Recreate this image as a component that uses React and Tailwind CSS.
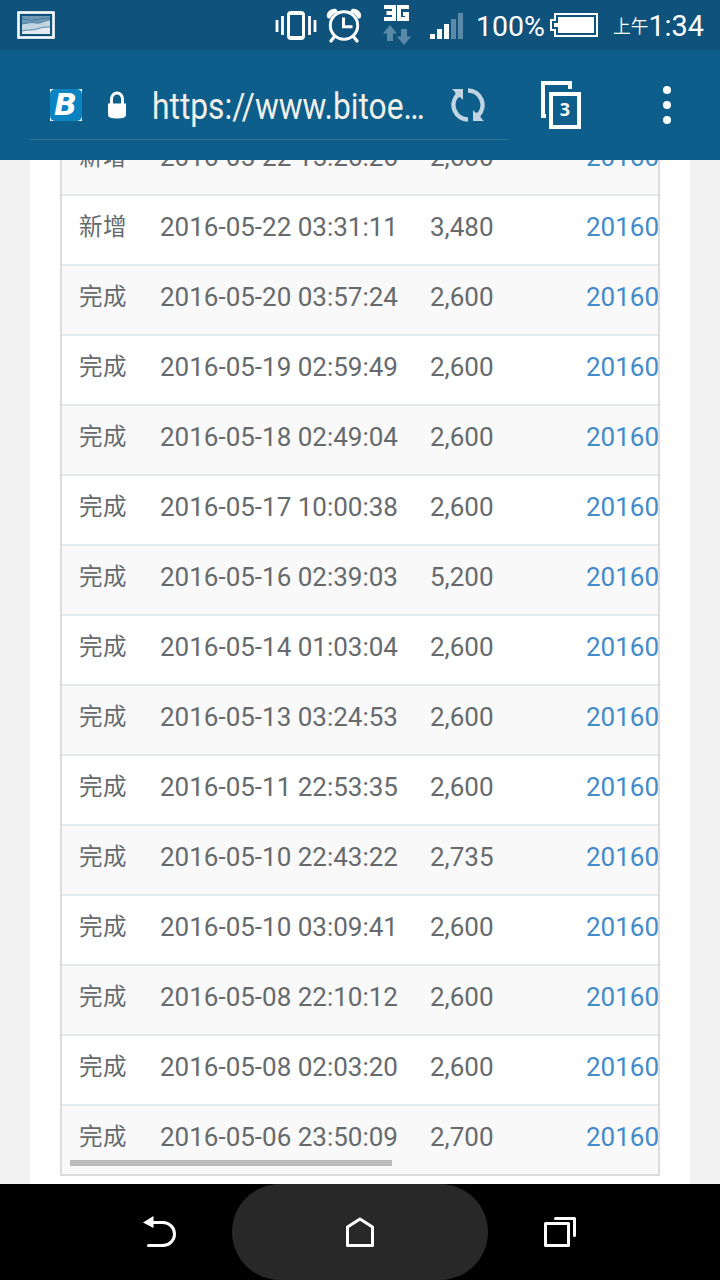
import React from "react";

const rows = [
  { status: "新增", date: "2016-05-22 15:26:26", amount: "2,600" },
  { status: "新增", date: "2016-05-22 03:31:11", amount: "3,480" },
  { status: "完成", date: "2016-05-20 03:57:24", amount: "2,600" },
  { status: "完成", date: "2016-05-19 02:59:49", amount: "2,600" },
  { status: "完成", date: "2016-05-18 02:49:04", amount: "2,600" },
  { status: "完成", date: "2016-05-17 10:00:38", amount: "2,600" },
  { status: "完成", date: "2016-05-16 02:39:03", amount: "5,200" },
  { status: "完成", date: "2016-05-14 01:03:04", amount: "2,600" },
  { status: "完成", date: "2016-05-13 03:24:53", amount: "2,600" },
  { status: "完成", date: "2016-05-11 22:53:35", amount: "2,600" },
  { status: "完成", date: "2016-05-10 22:43:22", amount: "2,735" },
  { status: "完成", date: "2016-05-10 03:09:41", amount: "2,600" },
  { status: "完成", date: "2016-05-08 22:10:12", amount: "2,600" },
  { status: "完成", date: "2016-05-08 02:03:20", amount: "2,600" },
  { status: "完成", date: "2016-05-06 23:50:09", amount: "2,700" },
];

const StatusBar = () => {
  return (
    <div className="flex h-[50px] items-center bg-[#0f537c] pl-[17px] text-white">
      <svg className="shrink-0" width="38" height="28" viewBox="0 0 38 28">
        <rect x="1.5" y="1.5" width="35" height="25" fill="#0f537c" stroke="white" strokeWidth="2.6" />
        <rect x="5" y="5" width="28" height="18" fill="#6f9ab5" />
        <path d="M5 13c6-1 9-2 14-1s9-3 14-3v14H5z" fill="#c3d5e1" />
        <path d="M5 20c6-2 10 0 15-2s9-2 13-2v7H5z" fill="#e3ebf1" />
        <path
          d="M5 8c6 0 9 2 14 1s9-2 14-2M5 13c6-1 9-2 14-1s9-3 14-3M5 20c6-2 10 0 15-2s9-2 13-2"
          fill="none"
          stroke="#38729a"
          strokeWidth="0.8"
        />
      </svg>
      <svg className="ml-[220px] shrink-0" width="42" height="32" viewBox="0 0 42 32">
        <rect x="13.5" y="3.5" width="15" height="26" rx="2.5" fill="none" stroke="white" strokeWidth="3" />
        <path d="M14 3h14v3H14zM14 27h14v3H14z" fill="white" />
        <path d="M2 11v12M7.5 7v19M34.5 7v19M40 11v12" stroke="white" strokeWidth="2.8" />
      </svg>
      <svg className="ml-[9px] shrink-0" width="36" height="36" viewBox="0 0 36 36">
        <path d="M1 10C0 5 5 1 10 2L12 4.5Q6 7 4 11.500Q2 12 1 10zM35 10C36 5 31 1 26 2L24 4.500Q30 7 32 11.500Q34 12 35 10z" fill="white" />
        <circle cx="18" cy="18.500" r="13.700" fill="none" stroke="white" strokeWidth="3" />
        <path d="M17.500 10.500v9.300h9" fill="none" stroke="white" strokeWidth="3" />
        <path d="M8.500 29.500L5 34M27.500 29.500L31 34" stroke="white" strokeWidth="3.200" strokeLinecap="round" />
      </svg>
      <svg className="ml-[20px] shrink-0" width="30" height="42" viewBox="0 0 30 42">
        <path
          d="M2 3H12V15H2M4.500 9H12M27 3H17V15H25V10H21"
          fill="none"
          stroke="white"
          strokeWidth="4"
        />
        <path d="M8 21L15 29.500H11V37H5V29.500H1z" fill="#5a8aa8" />
        <path d="M22 41L29 32.500H25V25H19V32.500H15z" fill="#5a8aa8" />
      </svg>
      <svg className="ml-[18px] shrink-0" width="33" height="28" viewBox="0 0 33 28">
        <path d="M0 23h5v5H0zM7 18h5v10H7zM14 13h5v15h-5z" fill="white" />
        <path d="M21 8h5v20h-5zM28 2h5v26h-5z" fill="#5a8aa8" />
      </svg>
      <span className="ml-[13px] w-[68px] whitespace-nowrap pt-1 text-[28.5px] leading-none">
        100%
      </span>
      <svg className="ml-[6px] shrink-0" width="48" height="24" viewBox="0 0 48 24">
        <path d="M5 1H47V23H5V17H1V7H5z" fill="none" stroke="white" strokeWidth="2" />
        <path d="M8 4H44V20H8V14H4V10H8z" fill="white" />
      </svg>
      <span className="ml-[15px] whitespace-nowrap pt-0.5 font-['Noto_Sans_CJK_TC',sans-serif] text-[17.7px] font-[350] leading-none">
        上午
      </span>
      <span className="whitespace-nowrap pt-0.5 text-[28.8px] leading-none">1:34</span>
    </div>
  );
};

const AddressBar = () => {
  return (
    <div className="flex h-[110px] items-center bg-[#0e5e8b] pl-[30px]">
      <div className="flex h-[69px] w-[478px] items-center border-b border-[#2f7499] pl-5">
        <div className="h-8 w-8 shrink-0 bg-white">
          <div className="flex h-8 w-8 items-center justify-center rounded-[5px] bg-[#0c83c1] pr-px font-['DejaVu_Sans',sans-serif] text-[30px] font-bold italic leading-none text-white">
            B
          </div>
        </div>
        <svg className="ml-[26px] shrink-0" width="18" height="28" viewBox="0 0 18 28">
          <path d="M3.500 14V8a5.500 6 0 0 1 11 0v6" fill="none" stroke="white" strokeWidth="3" />
          <path d="M0 12.500H18V24Q18 27.500 9 27.500T0 24z" fill="white" />
        </svg>
        <span className="ml-[26px] w-[274px] whitespace-nowrap pt-1">
          <span className="inline-block origin-left scale-x-[0.882] text-[36px] leading-none text-[#f2efe9]">
            https://www.bitoe…
          </span>
        </span>
        <svg className="ml-[25px] shrink-0" width="34" height="34" viewBox="0 0 34 34">
          <path
            d="M17 31.500A14.500 14.500 0 0 1 6.500 7M17 2.500A14.500 14.500 0 0 1 27.500 27"
            fill="none"
            stroke="#c0d4e2"
            strokeWidth="4.400"
          />
          <path d="M1 1H12V12L9 9L6 10L4 4zM33 33H22V22L25 25L28 24L30 30z" fill="#c0d4e2" />
        </svg>
      </div>
      <svg className="ml-[33px]" width="40" height="48" viewBox="0 0 40 48">
        <path d="M5 35H2V2H29V8" fill="none" stroke="white" strokeWidth="4" />
        <rect x="10" y="13" width="28" height="33" fill="none" stroke="white" strokeWidth="4" />
        <text x="24" y="35" textAnchor="middle" fill="white" fontFamily="Open Sans" fontWeight="700" fontSize="18">
          3
        </text>
      </svg>
      <svg className="ml-[82px]" width="8" height="38" viewBox="0 0 8 38">
        <circle cx="4" cy="4" r="4" fill="white" />
        <circle cx="4" cy="19" r="4" fill="white" />
        <circle cx="4" cy="34" r="4" fill="white" />
      </svg>
    </div>
  );
};

const OrderTable = () => {
  return (
    <div className="relative flex h-[1016px] w-[600px] flex-col justify-end overflow-hidden border-x-2 border-b-2 border-[#dcdcdc]">
      {rows.map((row) => (
        <div
          key={row.date}
          className="flex h-[70px] w-[720px] shrink-0 items-center border-t-2 border-[#e4e9ee] pb-[6px] pl-4 odd:bg-[#f9f9f9]">
          <span className="w-[82px] pb-[2px] pl-px font-['Noto_Sans_CJK_TC',sans-serif] text-[23.5px] font-normal leading-none tracking-[0.5px]">
            {row.status}
          </span>
          <span className="w-[270px]">{row.date}</span>
          <span className="w-[156px]">{row.amount}</span>
          <a className="text-[#428bca]">20160</a>
        </div>
      ))}
      {/* horizontal scroll indicator */}
      <div className="absolute bottom-2 left-2 h-1.5 w-[322px] bg-[#bababa]" />
    </div>
  );
};

const NavBar = () => {
  return (
    <div className="flex h-24 items-center bg-black">
      <button className="flex w-[232px] justify-end pr-[55px]">
        <svg width="34" height="32" viewBox="0 0 34 32">
          <path d="M9 6.500H20a11.500 11.500 0 0 1 0 23H5.500" fill="none" stroke="white" strokeWidth="3" strokeLinecap="round" />
          <path d="M0 6.500L10.500 0V12z" fill="white" />
        </svg>
      </button>
      <button className="flex h-24 w-64 items-center justify-center rounded-[48px] bg-[#282828]">
        <svg width="28" height="30" viewBox="0 0 28 30">
          <path d="M1.500 10L14 2L26.500 10V28.500H1.500z" fill="none" stroke="white" strokeWidth="3" strokeLinejoin="round" />
        </svg>
      </button>
      <button className="pl-14">
        <svg width="32" height="30" viewBox="0 0 32 30">
          <rect x="1.500" y="6.500" width="23" height="22" fill="none" stroke="white" strokeWidth="3" strokeLinejoin="round" />
          <path d="M11.500 1.500H30.500V18.500" fill="none" stroke="white" strokeWidth="3" strokeLinecap="round" strokeLinejoin="round" />
        </svg>
      </button>
    </div>
  );
};

const App = () => {
  return (
    <div className="flex h-[1280px] w-[720px] flex-col overflow-hidden bg-[#f2f2f2] font-['Roboto',sans-serif] text-[26px] leading-none text-[#666a6d]">
      <StatusBar />
      <AddressBar />
      <div className="mx-[30px] h-[1024px] bg-white px-[30px]">
        <OrderTable />
      </div>
      <NavBar />
    </div>
  );
};

export default App;
